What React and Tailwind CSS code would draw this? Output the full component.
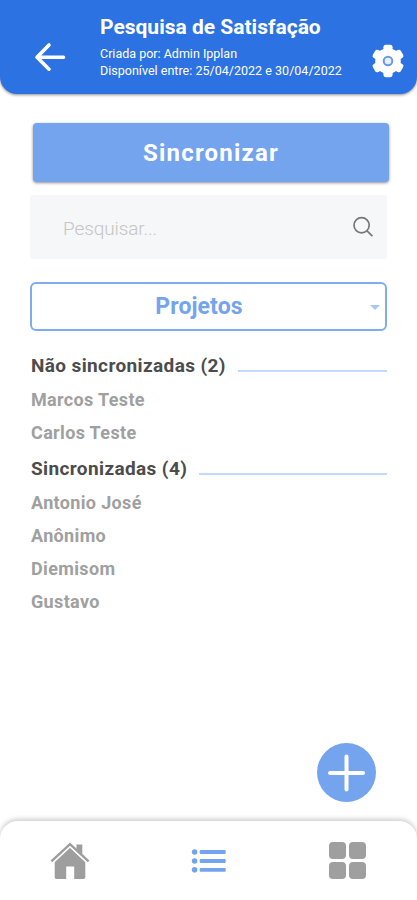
const groups = [
  {
    title: "Não sincronizadas (2)",
    people: ["Marcos Teste", "Carlos Teste"],
  },
  {
    title: "Sincronizadas (4)",
    people: ["Antonio José", "Anônimo", "Diemisom", "Gustavo"],
  },
];

function ArrowIcon() {
  return (
    <svg width="32" height="30" viewBox="0 0 32 30" fill="none" stroke="white" strokeWidth="3.6" strokeLinecap="round" strokeLinejoin="round">
      <path d="M15 3 3 15.2 15 27.2M3 15.2h26.5" />
    </svg>
  );
}

function GearIcon() {
  return (
    <svg width="34" height="34" viewBox="-17 -17 34 34" fill="white">
      <circle r="12.8" />
      {[0, 60, 120].map((angle) => (
        <rect key={angle} x="-4.6" y="-16.2" width="9.2" height="32.4" rx="2.4" transform={`rotate(${angle})`} />
      ))}
      <circle r="4.3" fill="#e8effc" stroke="#6a98e8" strokeWidth="2" />
    </svg>
  );
}

function SearchIcon() {
  return (
    <svg width="22" height="22" viewBox="0 0 22 22" fill="none" stroke="#777" strokeWidth="1.7">
      <circle cx="9.6" cy="9.2" r="7.6" />
      <path d="m15 14.8 5.4 5.4" />
    </svg>
  );
}

function HomeIcon() {
  return (
    <svg width="40" height="38" viewBox="0 0 40 38" fill="#9e9e9e">
      <path d="M20 5.5 35.3 20v15.2q0 1.8-1.8 1.8h-9.3V24.5h-8V37H6.5q-1.8 0-1.8-1.8V20z" />
      <path d="M1.4 21.900 20 4.600l18.600 17.300" fill="none" stroke="white" strokeWidth="1.6" />
      <path d="M1.4 19.4 20 2.1l18.6 17.3" fill="none" stroke="#9e9e9e" strokeWidth="2.4" />
      <path d="M26.5 2.6h5.8v10.5l-5.8-5.3z" />
    </svg>
  );
}

function ListIcon() {
  return (
    <svg width="36" height="24" viewBox="0 0 36 24" fill="#75a4ee">
      {[3, 12, 20.8].map((y) => (
        <g key={y}>
          <circle cx="3.6" cy={y} r="2.8" />
          <rect x="8.7" y={y - 1.9} width="26" height="3.8" rx="0.8" />
        </g>
      ))}
    </svg>
  );
}

function GridIcon() {
  return (
    <div className="grid grid-cols-2 gap-[3px]">
      <span className="size-[17px] rounded-[4px] bg-[#9f9f9f]" />
      <span className="size-[17px] rounded-[4px] bg-[#9f9f9f]" />
      <span className="size-[17px] rounded-[4px] bg-[#9f9f9f]" />
      <span className="size-[17px] rounded-[4px] bg-[#9f9f9f]" />
    </div>
  );
}

function Header() {
  return (
    <header className="flex h-[94px] rounded-b-[17px] bg-[#2d72e2] pl-[34px] text-white shadow-[0_1px_3px_rgba(0,0,0,0.45)]">
      <button type="button" className="mt-[42px] h-[30px] w-[66px]">
        <ArrowIcon />
      </button>
      <div className="w-[270px] pt-[14px] whitespace-nowrap">
        <h1 className="text-[21px] leading-[26px] font-bold">Pesquisa de Satisfação</h1>
        <p className="mt-[5px] text-[12.5px] leading-[17px]">Criada por: Admin Ipplan</p>
        <p className="text-[12.5px] leading-[17px] tracking-[0.02px]">Disponível entre: 25/04/2022 e 30/04/2022</p>
      </div>
      <button type="button" className="mt-[44px] ml-px size-[34px]">
        <GearIcon />
      </button>
    </header>
  );
}

function Group({ group }) {
  return (
    <section className="pb-[3px]">
      <div className="flex h-[33px] items-center">
        <h2 className="text-[19px] font-bold tracking-[0.38px] whitespace-nowrap text-[#4c4c4c]">
          {group.title}
        </h2>
        <span className="mt-[9px] ml-[12px] h-[2px] flex-1 bg-[#c4d9fb]" />
      </div>
      <ul>
        {group.people.map((name) => (
          <li key={name} className="h-[33.3px] text-[18px] leading-[33px] font-bold tracking-[0.35px] text-[#a0a0a0]">
            {name}
          </li>
        ))}
      </ul>
    </section>
  );
}

export default function App() {
  return (
    <div className="flex h-[900px] w-[417px] flex-col overflow-hidden bg-white font-['Roboto',sans-serif]">
      <Header />

      <main className="flex flex-1 flex-col px-[30px]">
        <button
          type="button"
          className="mt-[29px] -mr-[2px] ml-[3px] h-[59px] shrink-0 rounded-[4px] bg-[#75a4ee] pt-px text-[24px] font-bold tracking-[1.2px] text-white shadow-[0_1px_3px_rgba(0,0,0,0.45)]"
        >
          Sincronizar
        </button>

        <div className="mt-[13px] flex h-[64px] shrink-0 items-center justify-between rounded-[3px] bg-[#f5f7f8] pr-[13px] pl-[33px]">
          <span className="mt-[4px] text-[19px] font-light tracking-[-0.1px] text-[#c5c5c5]">Pesquisar...</span>
          <SearchIcon />
        </div>

        <button
          type="button"
          className="mt-[23px] flex h-[49px] shrink-0 items-center rounded-[6px] border-2 border-[#81abef] pr-[5px] text-[#75a4ee]"
        >
          <span className="flex-1 pt-[2px] pr-[4px] text-center text-[23px] font-bold tracking-[0.1px]">Projetos</span>
          <span className="mt-px border-x-[5px] border-t-[5px] border-x-transparent border-t-[#a9c6f5]" />
        </button>

        <div className="mt-[19px] pl-px">
          {groups.map((group) => (
            <Group key={group.title} group={group} />
          ))}
        </div>

        <button type="button" className="mt-auto mr-[11px] mb-[19px] flex size-[59px] items-center justify-center self-end rounded-full bg-[#75a4ee]">
          <svg width="40" height="40" viewBox="0 0 40 40" stroke="white" strokeWidth="4" strokeLinecap="round">
            <path d="M19.5 3.5v33M3 20h33" />
          </svg>
        </button>
      </main>

      <nav className="flex h-[79px] rounded-t-[18px] bg-white shadow-[0_-2px_5px_rgba(0,0,0,0.2)]">
        <button type="button" className="flex flex-1 items-center justify-center">
          <HomeIcon />
        </button>
        <button type="button" className="flex flex-1 items-center justify-center">
          <ListIcon />
        </button>
        <button type="button" className="flex flex-1 items-center justify-center">
          <GridIcon />
        </button>
      </nav>
    </div>
  );
}
